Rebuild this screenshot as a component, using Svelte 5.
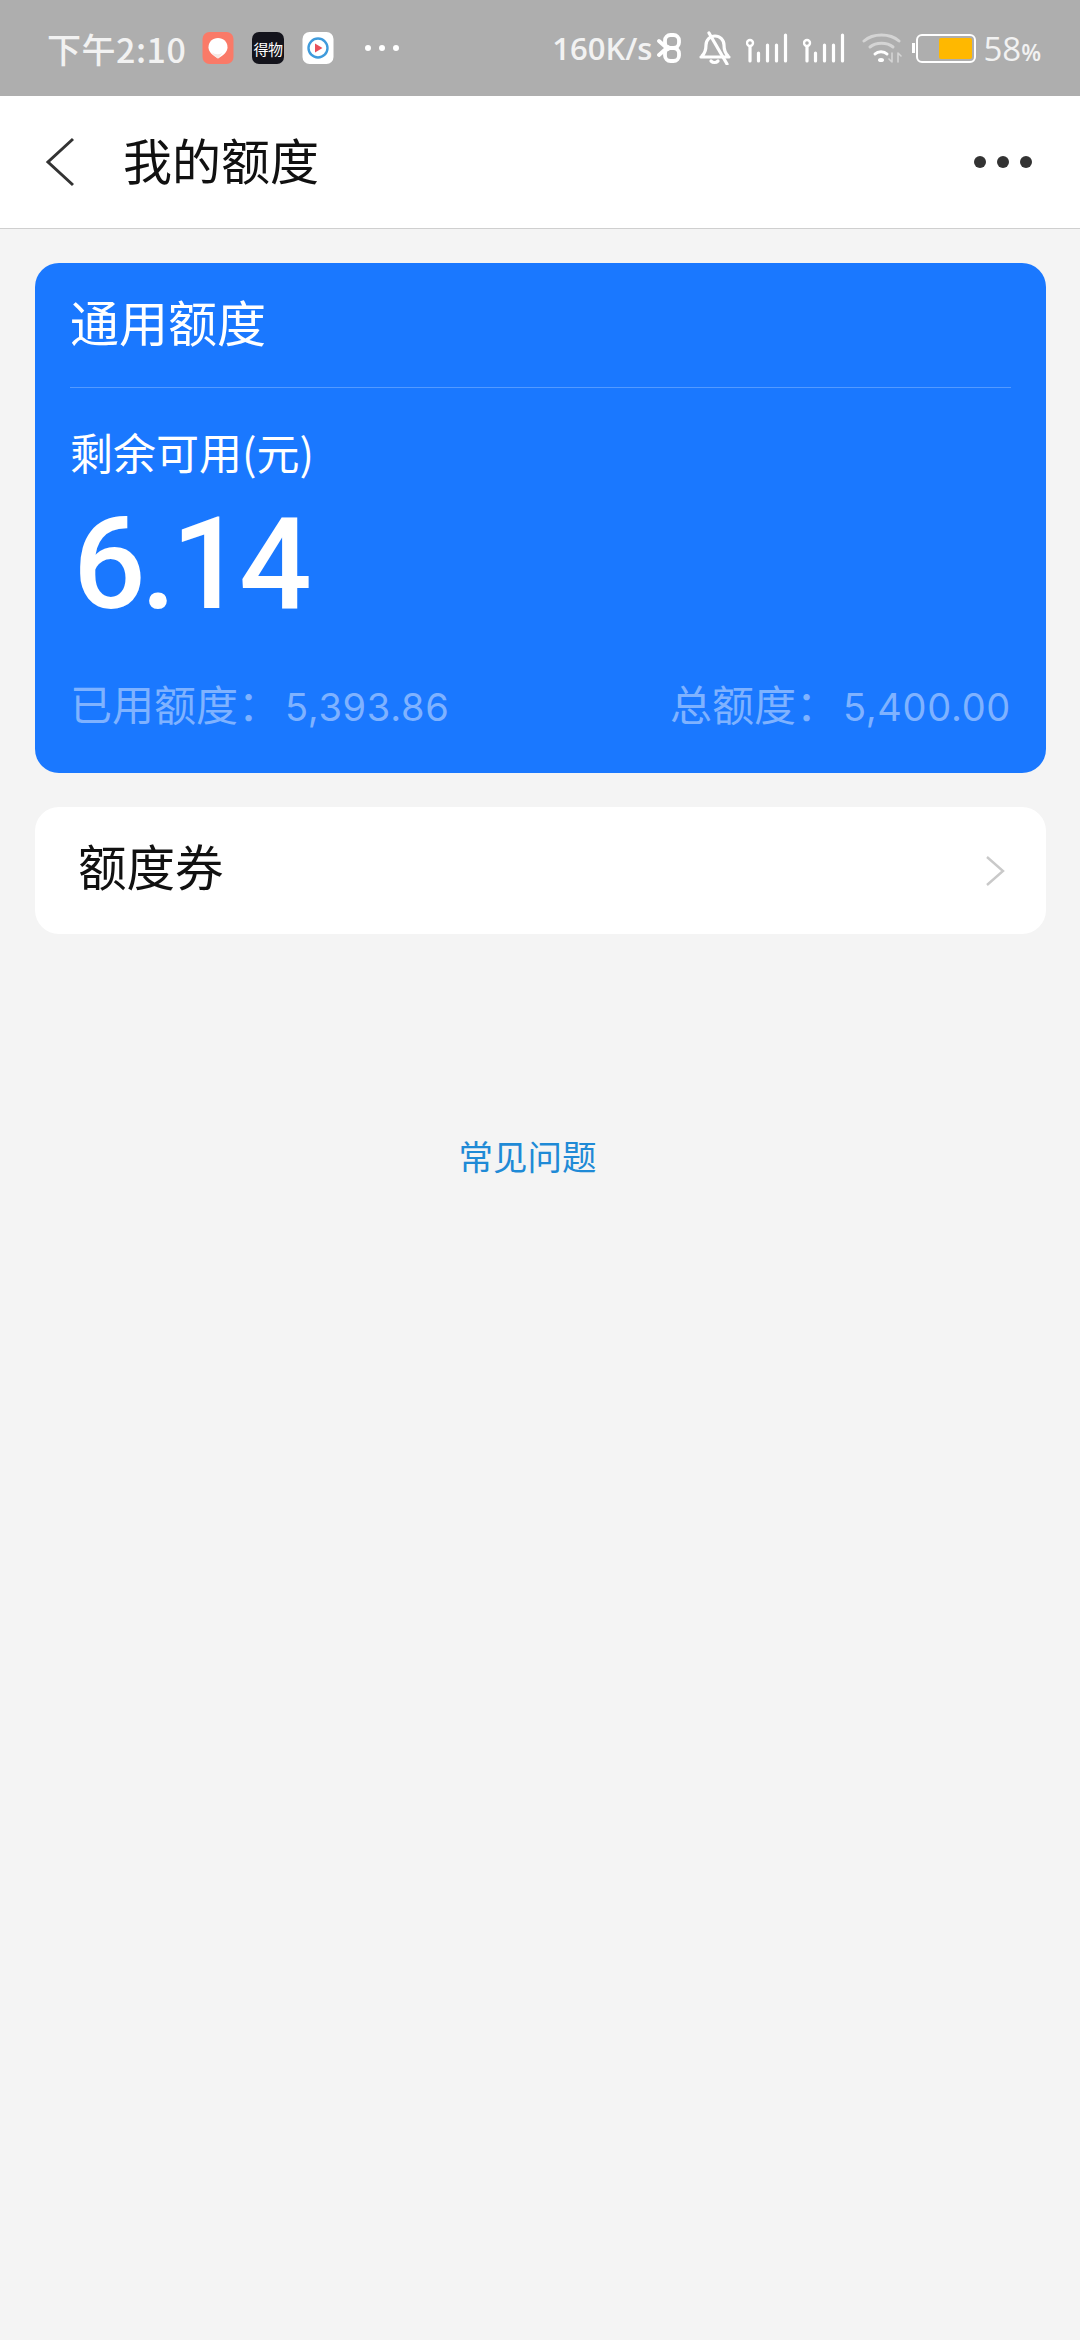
<div class="page">
	<header class="status">
		<span class="time">下午2:10</span>
		<div class="apps">
			<svg class="app" viewBox="0 0 31 32">
				<rect width="31" height="32" rx="7" fill="#fa7a68" />
				<path d="M15.500 6c5.400 0 9.500 3.900 9.500 9.200 0 4.600-4 8.100-9.500 11.300C10 23.300 6 19.800 6 15.200 6 9.900 10.100 6 15.500 6z" fill="#fff" />
				<path d="M9 20c3 2.500 7 3 11 1-1.500 2-3 3.500-4.500 5.500C12.500 24.700 10.500 22.500 9 20z" fill="#f5e8e4" />
			</svg>
			<div class="app dewu"><span>得物</span></div>
			<svg class="app" viewBox="0 0 31 32">
				<rect width="31" height="32" rx="7" fill="#fff" />
				<circle cx="15.500" cy="16" r="9.500" fill="none" stroke="#3f9bdc" stroke-width="2.400" />
				<path d="M12.500 11.500l7.500 4.500-7.500 4.500z" fill="#e8505b" />
			</svg>
		</div>
		<div class="more-dots"><i></i><i></i><i></i></div>

		<div class="right">
			<span class="speed">160K/s</span>
			<svg class="bt" viewBox="0 0 24 30" width="24" height="30" fill="none" stroke="#fff" stroke-width="3.800" stroke-linecap="round" stroke-linejoin="round">
				<path d="M2 8l9 8M2 22l9-8" />
				<rect x="8" y="2" width="14" height="13" rx="5.500" />
				<rect x="8" y="15" width="14" height="13" rx="5.500" />
			</svg>
			<svg class="bell" viewBox="0 0 32 34" width="32" height="34" fill="none" stroke="#fff" stroke-width="3.200" stroke-linecap="round" stroke-linejoin="round">
				<path d="M2 26h28M3 25c3-3 4-6 4-11 0-5 4-9 9-9s9 4 9 9c0 5 1 8 4 11" />
				<path d="M12 30c2 2 5 2 7 0" />
				<path d="M10 2l18 31" />
			</svg>
			{#each [0, 1] as n (n)}
				<svg class="signal" viewBox="0 0 42 30" width="42" height="30" fill="none" stroke="#fff" stroke-width="3.200" stroke-linecap="round">
					<circle cx="4" cy="10" r="3" stroke-width="2.400" />
					<path d="M4 14v14M12.500 20v8M21.500 12v16M30.500 12v16M39.500 2v26" />
				</svg>
			{/each}
			<svg class="wifi" viewBox="0 0 40 30" width="40" height="30" fill="none" stroke="#d4d4d4" stroke-width="3" stroke-linecap="round">
				<path d="M2 8C11 0 28 0 37 8" />
				<path d="M8 14c6-5 17-5 23 0" />
				<path d="M13 21c3-3 9-3 12 0" stroke="#fff" />
				<ellipse cx="19" cy="27" rx="3" ry="2" fill="#fff" stroke="none" />
				<path d="M30 20v9m-3-3l3 3M36 29v-9m0 0l3 3" stroke-width="1.600" />
			</svg>
			<div class="battery">
				<span class="cap"></span>
				<div class="shell"><div class="level"></div></div>
			</div>
			<span class="pct">58<small>%</small></span>
		</div>
	</header>

	<nav class="navbar">
		<svg class="back" viewBox="0 0 30 50" width="30" height="50" fill="none" stroke="#333" stroke-width="3">
			<path d="M29 2L4 25l25 23" />
		</svg>
		<h1>我的额度</h1>
		<div class="nav-dots"><i></i><i></i><i></i></div>
	</nav>

	<main class="content">
		<section class="quota">
			<h2>通用额度</h2>
			<p class="label">剩余可用(元)</p>
			<p class="amount">6.14</p>
			<div class="foot">
				<span>已用额度：<b>5,393.86</b></span>
				<span>总额度：<b>5,400.00</b></span>
			</div>
		</section>

		<section class="row">
			<span>额度券</span>
			<svg viewBox="0 0 20 32" width="20" height="32" fill="none" stroke="#c9c9c9" stroke-width="2.400">
				<path d="M2 2l16 14L2 30" />
			</svg>
		</section>

		<a class="faq" href="#faq">常见问题</a>
	</main>
</div>

<style>
	:global(body) {
		margin: 0;
		background: #f4f4f4;
	}

	.page {
		height: 2340px;
		overflow: hidden;
		background: #f4f4f4;
		font-family: "Noto Sans CJK SC", "Noto Sans", sans-serif;
	}

	.status {
		height: 96px;
		box-sizing: border-box;
		background: #aeaeae;
		display: flex;
		align-items: center;
		padding: 0 39px 0 47px;
		color: #f2f2f2;
	}

	.time {
		font-size: 34px;
		font-weight: 500;
		width: 155px;
		white-space: nowrap;
		letter-spacing: 0.5px;
	}

	.apps {
		display: flex;
		gap: 18px;
	}

	.app {
		display: block;
		width: 32px;
		height: 32px;
	}

	.dewu {
		background: #14141c;
		border-radius: 7px;
		color: #fff;
		font-size: 15px;
		letter-spacing: -0.5px;
		display: flex;
		align-items: center;
		justify-content: center;
		white-space: nowrap;
	}

	.more-dots {
		display: flex;
		gap: 8px;
		margin-left: 31px;
	}

	.more-dots i {
		width: 6px;
		height: 6px;
		border-radius: 50%;
		background: #fff;
	}

	.right {
		margin-left: auto;
		display: flex;
		align-items: center;
	}

	.right svg {
		display: block;
	}

	.speed {
		font-family: "Open Sans", sans-serif;
		font-size: 31px;
		font-weight: 600;
	}

	.bt { margin-left: 5px; }
	.bell { margin-left: 18px; }
	.signal { margin-left: 15px; }
	.wifi { margin-left: 17px; }

	.battery {
		position: relative;
		margin-left: 10px;
		padding-left: 4px;
	}

	.cap {
		position: absolute;
		left: 0;
		top: 9px;
		width: 3px;
		height: 10px;
		background: #fff;
	}

	.shell {
		width: 60px;
		height: 29px;
		box-sizing: border-box;
		border: 2.5px solid #fff;
		border-radius: 6px;
		padding: 2px;
		display: flex;
		justify-content: flex-end;
	}

	.level {
		width: 33px;
		background: #ffb800;
		border-radius: 2px;
	}

	.pct {
		margin-left: 7px;
		font-family: "Open Sans", sans-serif;
		font-size: 33px;
		font-weight: 500;
	}

	.pct small {
		font-size: 23px;
		font-weight: 600;
	}

	.navbar {
		height: 133px;
		box-sizing: border-box;
		background: #fff;
		border-bottom: 1px solid #cfcfcf;
		display: flex;
		align-items: center;
		padding: 0 48px 0 44px;
	}

	.back {
		display: block;
	}

	.navbar h1 {
		margin: 0 0 0 49px;
		padding-bottom: 8px;
		font-size: 49px;
		font-weight: 400;
		color: #111;
	}

	.nav-dots {
		margin-left: auto;
		display: flex;
		gap: 11px;
	}

	.nav-dots i {
		width: 12px;
		height: 12px;
		border-radius: 50%;
		background: #333;
	}

	.content {
		padding: 34px 34px 0 35px;
		display: flex;
		flex-direction: column;
	}

	.quota {
		height: 510px;
		box-sizing: border-box;
		background: #1a78ff;
		border-radius: 24px;
		color: #fff;
		padding: 0 35px;
	}

	.quota h2 {
		margin: 0;
		height: 125px;
		box-sizing: border-box;
		padding: 0 0 10px;
		display: flex;
		align-items: center;
		font-size: 49px;
		font-weight: 400;
		border-bottom: 1px solid rgba(255, 255, 255, 0.25);
	}

	.label {
		margin: 35px 0 0;
		font-size: 43px;
		line-height: 56px;
	}

	.amount {
		margin: 15px 0 0 3px;
		font-family: Roboto, sans-serif;
		font-size: 128px;
		font-weight: 500;
		line-height: 140px;
		letter-spacing: -5px;
	}

	.foot {
		margin: 41px 0 0;
		display: flex;
		justify-content: space-between;
		font-size: 42px;
		line-height: 56px;
		color: #7fb2ff;
	}

	.foot b {
		font-family: Inter, sans-serif;
		font-weight: 400;
		font-size: 38px;
		letter-spacing: 0.7px;
		margin-left: 5px;
	}

	.row {
		margin-top: 34px;
		height: 127px;
		box-sizing: border-box;
		background: #fff;
		border-radius: 24px;
		padding: 0 41px 0 43px;
		display: flex;
		align-items: center;
		justify-content: space-between;
		font-size: 48.5px;
		color: #111;
	}

	.row span {
		padding-bottom: 12px;
	}

	.faq {
		margin: 196px 26px 0 0;
		align-self: center;
		font-size: 34.5px;
		line-height: 50px;
		color: #1f8ad6;
		text-decoration: none;
	}
</style>
